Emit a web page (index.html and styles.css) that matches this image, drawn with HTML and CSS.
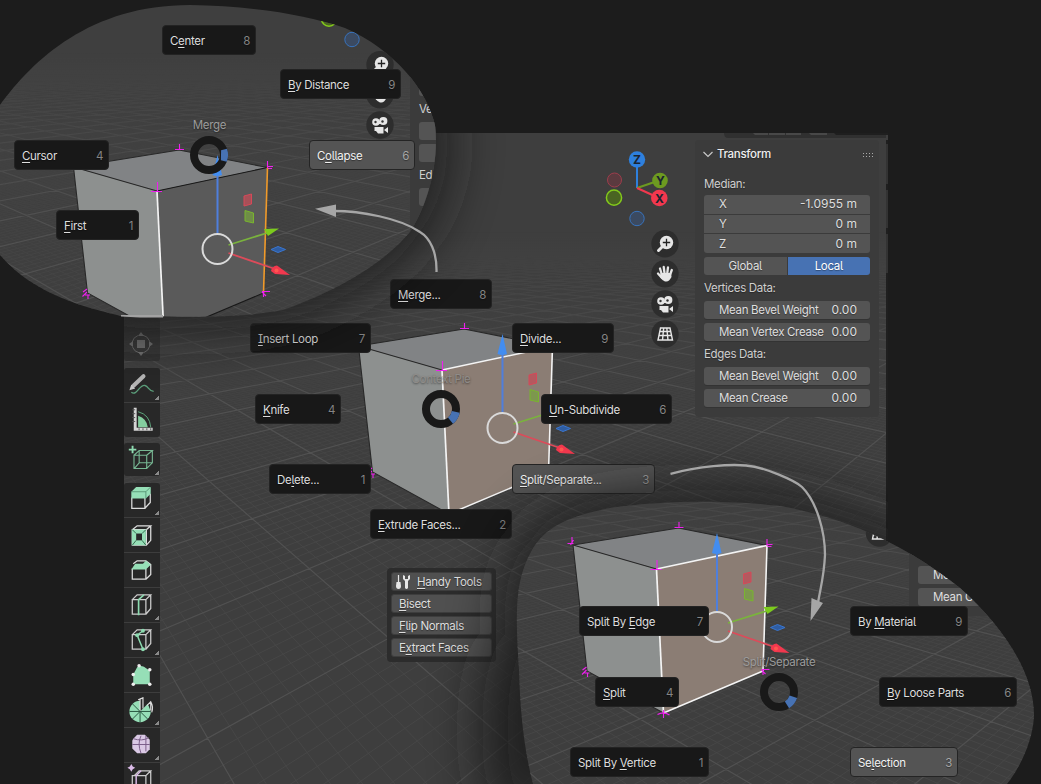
FILE: index.html
```html
<!DOCTYPE html>
<html lang="en">
<head>
<meta charset="utf-8">
<title>Context Pie</title>
<link rel="stylesheet" href="styles.css">
</head>
<body>
<svg class="defs" width="0" height="0" aria-hidden="true">
  <defs>
    <linearGradient id="fadeMinor" gradientUnits="userSpaceOnUse" x1="0" y1="255" x2="0" y2="520"><stop offset="0" stop-color="#000"/><stop offset=".35" stop-color="#555"/><stop offset="1" stop-color="#fff"/></linearGradient>
    <linearGradient id="fadeMajor" gradientUnits="userSpaceOnUse" x1="0" y1="232" x2="0" y2="400"><stop offset="0" stop-color="#000"/><stop offset="1" stop-color="#fff"/></linearGradient>
    <mask id="maskMinor" maskUnits="userSpaceOnUse" x="0" y="0" width="1041" height="784"><rect width="1041" height="784" fill="url(#fadeMinor)"/></mask>
    <mask id="maskMajor" maskUnits="userSpaceOnUse" x="0" y="0" width="1041" height="784"><rect width="1041" height="784" fill="url(#fadeMajor)"/></mask>
    <clipPath id="mainClip"><path d="M124 133H888V540H886V784H124Z"/></clipPath>
    <path id="lensA" d="M0 105C33 60 90 5 190 5C250 6 305 14 345 28C395 50 427 90 435 125C440 165 425 210 410 232C385 262 340 290 283 310C240 318 200 317 121 316C60 302 25 284 0 255Z"/>
    <path id="lensB" d="M533 784C524 750 520 710 519 670C515 610 515 580 532 550C545 528 565 517 610 508C670 499 740 501 780 506C850 518 910 548 960 588C1005 628 1035 675 1034 717C1032 745 1018 770 1007 784Z"/>
    <filter id="soft" x="-50%" y="-50%" width="200%" height="200%"><feGaussianBlur stdDeviation="27"/></filter>
    <g id="grid">
      <g mask="url(#maskMinor)"><path class="grid-minor"/></g>
      <g mask="url(#maskMajor)"><path class="grid-major"/></g>
    </g>
    <g id="cube">
      <path fill="#818385" d="M358.5 346L464 329L552.5 346.5L442 370Z"/>
      <path fill="#8d908f" d="M358.5 346L442 370L449 514L372.5 472Z"/>
      <path class="face" d="M442 370L552.5 346.5L548.5 472L449 514Z"/>
      <path fill="none" stroke="#282828" stroke-width="1.1" d="M442 370L358.5 346L464 329L552.5 346.5M358.5 346L372.5 472L449 514"/>
      <path class="face-edge" d="M442 370L552.5 346.5M548.5 472L449 514"/>
      <path class="right-edge" d="M552.5 346.5L548.5 472"/>
      <path fill="none" stroke="#f4f4f4" stroke-width="1.7" d="M442 370L449 514"/>
      <path class="spark" d="M442.500 361V370M436 370.500H447M464.500 323V329M460 328.500H469M552.500 340V347M553 345.500H558M553 347.500H557M357.500 338V345M353 344.500H359M356 346L359 341M368 471L372 468M370 474H375M373 474V478M367.500 475.500L372 471M547 470.500H555M548.500 470V476M551 475L547 471M449 511V519M443 515.500Q449 512 455 516"/>
    </g>
    <g id="gizmo">
      <path stroke="#4f7fdc" stroke-width="2" d="M502.500 412V354"/>
      <path fill="#438df0" d="M502.500 334L507 354Q502 356 497.500 354Z"/>
      <path stroke="#7ab33d" stroke-width="1.8" d="M513.500 424L552 412"/>
      <path fill="#7ccb1d" d="M564 407.500L549 408L553 415Z"/>
      <path stroke="#dc4b5a" stroke-width="1.8" d="M513.500 432L560 448"/>
      <path fill="#f2384e" d="M575 454L562 444.500Q557 445 556 450L560 453Z"/><circle cx="561.500" cy="449.500" r="2" fill="#ff5750"/>
      <path fill="#2f5da2" stroke="#3a76cf" d="M556 428.500L563 425.500L570.500 428.500L563 431.500Z"/>
      <path fill="#c14d58" fill-opacity=".75" stroke="#d74858" d="M529 375L536.500 373V383L529 385Z"/>
      <path fill="#77a23e" fill-opacity=".7" stroke="#79b52e" d="M530 389.500L538.500 392V402L530 400Z"/>
      <circle cx="502.500" cy="428" r="15" fill="none" stroke="#dadada" stroke-width="2"/>
    </g>
    <g id="axes">
      <circle cx="614.500" cy="180" r="7" fill="#5b3a3f" stroke="#9d3d4c"/>
      <circle cx="614" cy="197.700" r="7.600" fill="#4a6422" stroke="#83c91b" stroke-width="1.500"/>
      <circle cx="637" cy="218.500" r="7.200" fill="#3b4a61" stroke="#3873bd"/>
    </g>
    <g id="nav">
      <g class="nav-disc"><circle cx="665" cy="243.700" r="13.700"/><circle cx="665" cy="273.700" r="13.700"/><circle cx="665" cy="304" r="13.700"/><circle cx="665" cy="334" r="13.700"/></g>
      <g fill="#e6e6e6">
        <circle cx="666.500" cy="242.500" r="6.700"/><path stroke="#e6e6e6" stroke-width="3" stroke-linecap="round" d="M662 247L658.500 250.500"/><path stroke="#222" stroke-width="1.300" d="M662.800 242.500H670.200M666.500 238.800V246.200"/>
        <path fill="none" stroke="#e6e6e6" stroke-width="2.300" stroke-linecap="round" d="M662 275L660 268.500M664.500 273L663.700 267M667.300 273L668 267.300M670 275L671.800 270M662 278L658 273.500"/><path d="M660.500 273L671 273L671.500 277Q669 281.500 666.500 281.500H665Q662.500 281 660.500 277.500Z"/>
        <circle cx="661" cy="301" r="3.800"/><circle cx="668.300" cy="300" r="4.100"/><path d="M662 300H667V303H662ZM659.500 306H668.500V312.500H663L661 310H659.500ZM669 309L673 306V312Z"/><circle cx="660.500" cy="301" r="1.200" fill="#333"/><circle cx="667.500" cy="300.500" r="1.200" fill="#333"/>
        <path fill="none" stroke="#e6e6e6" stroke-width="1.400" d="M660.500 328H670L672.500 340H658ZM659.800 331.500H670.800M659 335.500H671.700M663.700 328L662.500 340M666.800 328L668 340"/>
      </g>
    </g>
  </defs>
</svg>

<main class="stage">
  <svg class="layer" viewBox="0 0 1041 784">
    <g clip-path="url(#mainClip)" class="selected-face">
      <rect x="124" y="133" width="764" height="651" fill="#3e3e3e"/>
      <use href="#grid"/><use href="#cube"/><use href="#gizmo"/><use href="#axes"/>
      <path stroke="#2e80dd" stroke-width="2" d="M637 188V160"/><path stroke="#6d9a20" stroke-width="2" d="M637 188L659 180.500"/><path stroke="#f2384e" stroke-width="2" d="M637 188L659 198"/>
      <circle cx="637" cy="159.500" r="8.200" fill="#2e80dd"/><circle cx="660" cy="180.500" r="7.800" fill="#6d9a20"/><circle cx="659.300" cy="198" r="8.300" fill="#f2384e"/>
      <g class="axis-name"><text x="637" y="164">Z</text><text x="660.500" y="185">Y</text><text x="659.500" y="202.500">X</text></g>
      <use href="#nav"/>
      <path fill="#303030" d="M724 133H886V138H728Q724 138 724 133Z"/>
      <path fill="#484848" d="M753 133H768V135H755ZM769 133H785V135H769ZM786 133H801V135H786ZM809 133H827V135H811Z"/>
      <path fill="#1f1f1f" d="M834 133H888V135H836ZM886 140H888V784H886Z"/><path fill="#333" d="M886 144H888V184H886ZM886 190H888V228H886ZM886 234H888V273H886Z"/>
    </g>
  </svg>

  <nav class="toolbar">
    <div class="tools">
      <svg class="tool first" viewBox="0 0 36 35"><g fill="none" stroke="#999"><circle cx="17" cy="18" r="9" stroke-dasharray="9 5" stroke-dashoffset="-2"/></g><path fill="#aaa" d="M13 14H21V22H13ZM17 6L20 10H14ZM17 30L20 26H14ZM5 18L9 15V21ZM29 18L25 15V21Z"/></svg>
    </div>
    <div class="tools">
      <svg class="tool corner" viewBox="0 0 36 35"><path stroke="#b5b5b5" stroke-width="4.200" stroke-linecap="round" d="M9.500 18L19.500 8.500"/><path fill="#c5c5c5" d="M5 23L7 17L11 21Z"/><path fill="none" stroke="#5b9e7a" stroke-width="1.400" d="M7 25C13 29 15 17 21 18C25 19 25 24 30 24"/></svg>
      <svg class="tool" viewBox="0 0 36 35"><path fill="#84ce9f" d="M14 13Q23 16 24 25H14Z"/><path fill="none" stroke="#5fa77e" d="M14 9Q26 12 27 25"/><path fill="none" stroke="#d5d5d5" stroke-width="3" d="M11 5V27H29"/><path stroke="#555" d="M8 9H11M8 13H11M8 17H11M8 21H11M15 28V30M19 28V30M23 28V30M27 28V30" transform="translate(0 -2)"/></svg>
    </div>
    <div class="tools">
      <svg class="tool corner" viewBox="0 0 36 35"><path stroke="#8edab0" stroke-width="2" d="M8 3V11M4 7H12"/><path fill="none" stroke="#76b692" stroke-width="1.200" d="M9.500 13H23V27H9.500ZM9.500 13L15 8H29L23 13M29 8V21L23 27M15 8V21H29M15 21L10 27"/></svg>
    </div>
    <div class="tools">
      <svg class="tool corner" viewBox="0 0 36 35"><path fill="none" stroke="#ddd" stroke-width="1.300" d="M7.500 15V26H21V15M21 26L26.500 20V11"/><path fill="#96dfb7" d="M7 9L12 4H27V11L22 16H7Z"/><path stroke="#4b8868" stroke-width=".8" fill="none" d="M7 9H22V16M22 9L27 4"/></svg>
      <svg class="tool" viewBox="0 0 36 35"><path fill="none" stroke="#ddd" stroke-width="1.300" d="M8 12V28H22.500V12ZM8 12L13 8H27L22.500 12M27 8V23L22.500 28"/><path fill="#96dfb7" d="M7.500 12H22V28H7.500Z"/><path fill="#292929" d="M12 16H18V23H12Z"/><path stroke="#356b4e" d="M8 12L12 16M22 12L18 16M8 28L12 23M22 28L18 23"/></svg>
      <svg class="tool" viewBox="0 0 36 35"><path fill="none" stroke="#ddd" stroke-width="1.300" d="M8 16V27H22V16M22 27L27 22V12L22 8H13L9 11"/><path fill="#96dfb7" d="M7 17L11 11H19L22 8L27 12L22 17Z"/></svg>
      <svg class="tool corner" viewBox="0 0 36 35"><path fill="none" stroke="#ccc" stroke-width="1.300" d="M8 12H22V27H8ZM8 12L13 7H27L22 12M27 7V21L22 27"/><path fill="none" stroke="#8cdaaf" stroke-width="1.700" d="M14.500 28V12L20 7"/></svg>
      <svg class="tool corner" viewBox="0 0 36 35"><path fill="none" stroke="#ccc" stroke-width="1.300" d="M8 12H22V27H8ZM8 12L13 7H27L22 12M27 7V21L22 27"/><path fill="none" stroke="#8cdaaf" stroke-width="1.500" d="M19 8L13 12.500L19 27"/><g fill="#8cdaaf"><circle cx="19" cy="8" r="2"/><circle cx="13" cy="12.500" r="2"/><circle cx="19" cy="27" r="2"/></g></svg>
      <svg class="tool" viewBox="0 0 36 35"><path fill="#96dfb7" d="M9 27V17L13 9.500Q16 7 20 9L26 13V27Z"/><g fill="#eee"><circle cx="9" cy="27" r="1.800"/><circle cx="9" cy="17" r="1.800"/><circle cx="15" cy="8" r="1.800"/><circle cx="26" cy="12" r="1.800"/><circle cx="26" cy="27" r="1.800"/></g></svg>
      <svg class="tool corner" viewBox="0 0 36 35"><circle cx="16" cy="19" r="11" fill="#96dfb7"/><path fill="#292929" d="M16 19V7L20 4L31 8L30 18L27 19L24 11Z"/><path fill="none" stroke="#ddd" stroke-width="1.200" d="M16 19V6L19 5V16M14 7L19 5M23 13L27 9Q30 14 28 20M27 9V18"/><path stroke="#27553f" d="M16 19V30M16 19H5M16 19L8 11M16 19L8 27M16 19L24 27M16 19H27"/></svg>
      <svg class="tool corner" viewBox="0 0 36 35"><path fill="#dac9e5" d="M9 11L13 7H21L26 12V22L22 26H13L8 21V13Z"/><path fill="none" stroke="#795c87" stroke-width="1" d="M8 17H26M17 8Q13 16 17 26M9 11Q18 14 25 10M22 8V24"/></svg>
      <svg class="tool" viewBox="0 0 36 35"><path fill="#dbbbe8" d="M7 1L8.500 3.500L11 5L8.500 6.500L7 9L5.500 6.500L3 5L5.500 3.500Z"/><path fill="none" stroke="#ccc" stroke-width="1.300" d="M8 28V13H22V28M10 13L15 8H27L22 13M27 8V28"/><path fill="none" stroke="#dbbbe8" stroke-width="1.500" d="M12 28V13L17 8"/></svg>
    </div>
  </nav>

  <aside class="panel">
    <header><svg width="10" height="7" viewBox="0 0 10 7"><path fill="none" stroke="#c8c8c8" stroke-width="1.200" d="M.5 1L5 5.500L9.500 1"/></svg><b>Transform</b><i class="grip"></i></header>
    <p class="label">Median:</p>
    <div class="stack">
      <div class="field"><span>X</span><span>-1.0955 m</span></div>
      <div class="field"><span>Y</span><span>0 m</span></div>
      <div class="field"><span>Z</span><span>0 m</span></div>
    </div>
    <div class="switch"><span>Global</span><span class="on">Local</span></div>
    <p class="label">Vertices Data:</p>
    <div class="field solo"><span>Mean Bevel Weight</span><span>0.00</span></div>
    <div class="field solo"><span>Mean Vertex Crease</span><span>0.00</span></div>
    <p class="label">Edges Data:</p>
    <div class="field solo"><span>Mean Bevel Weight</span><span>0.00</span></div>
    <div class="field solo"><span>Mean Crease</span><span>0.00</span></div>
  </aside>

  <section class="handy">
    <div class="row lead"><svg width="16" height="16" viewBox="0 0 16 16"><path stroke="#e6e6e6" stroke-width="1.200" d="M3.500 1V8"/><path fill="#e6e6e6" d="M1.500 8H5.500L6 12Q6 15 3.500 15Q1 15 1 12Z"/><path fill="#e6e6e6" d="M8 1V5L10 7V14Q11.500 16 13 14V7L15 5V1L13 2V5H10V2Z"/></svg><span><u>H</u>andy Tools</span></div>
    <div class="row"><span><u>B</u>isect</span></div>
    <div class="row"><span><u>F</u>lip Normals</span></div>
    <div class="row"><span>E<u>x</u>tract Faces</span></div>
  </section>

  <div class="pie-title on-cube" style="left:441px;top:379px">Context Pie</div>
  <svg class="ring" style="left:421px;top:389px" viewBox="-20 -20 40 40"><circle r="15" fill="none" stroke="#191919" stroke-width="8"/><path class="wedge" transform="rotate(31)" d="M17.900 -6.500A19 19 0 0 1 17.900 6.500L10.400 3.800A11 11 0 0 0 10.400 -3.800Z"/></svg>
  <div class="item" style="left:390px;top:279px;width:102px"><span><u>M</u>erge...</span><kbd>8</kbd></div>
  <div class="item" style="left:250px;top:323px;width:121px"><span><u>I</u>nsert Loop</span><kbd>7</kbd></div>
  <div class="item" style="left:512px;top:323px;width:102px"><span><u>D</u>ivide...</span><kbd>9</kbd></div>
  <div class="item" style="left:255px;top:394px;width:86px"><span><u>K</u>nife</span><kbd>4</kbd></div>
  <div class="item" style="left:541px;top:394px;width:131px"><span><u>U</u>n-Subdivide</span><kbd>6</kbd></div>
  <div class="item" style="left:269px;top:464px;width:102px"><span>De<u>l</u>ete...</span><kbd>1</kbd></div>
  <div class="item active" style="left:512px;top:464px;width:143px"><span><u>S</u>plit/Separate...</span><kbd>3</kbd></div>
  <div class="item" style="left:370px;top:509px;width:142px"><span><u>E</u>xtrude Faces...</span><kbd>2</kbd></div>

  <svg class="layer" viewBox="0 0 1041 784">
    <g clip-path="url(#mainClip)"><g class="halo" filter="url(#soft)"><use href="#lensA"/><use href="#lensB"/><ellipse cx="520" cy="730" rx="26" ry="90"/></g></g>
  </svg>

  <div class="lens lens-a">
    <svg class="layer" viewBox="0 0 1041 784"><rect width="1041" height="784" fill="#3f3f3f"/>
      <g class="plain-face" transform="translate(-285 -179)"><use href="#grid"/><use href="#cube"/><use href="#gizmo"/><use href="#axes"/><use href="#nav"/></g></svg>
    <div class="slice slice-a"><div class="field"></div><p class="label">Ve</p><div class="field"></div><div class="field"></div><p class="label">Ed</p><div class="field"></div></div>
  </div>
  <div class="lens lens-b">
    <svg class="layer" viewBox="0 0 1041 784"><rect width="1041" height="784" fill="#3e3e3e"/>
      <g class="selected-face" transform="translate(214.500 199)"><use href="#grid"/><use href="#cube"/><use href="#gizmo"/><use href="#nav"/></g></svg>
    <div class="slice slice-b"><div class="field"><span>Mea</span></div><div class="field"><span>Mean Cr</span></div></div>
  </div>

  <div class="pie-title" style="left:209.500px;top:125px">Merge</div>
  <svg class="ring" style="left:189px;top:135px" viewBox="-20 -20 40 40"><circle r="15" fill="none" stroke="#191919" stroke-width="8"/><path class="wedge" transform="rotate(1)" d="M17.900 -6.500A19 19 0 0 1 17.900 6.500L12 5V-5Z"/></svg>
  <div class="item" style="left:162px;top:25px;width:94px"><span>C<u>e</u>nter</span><kbd>8</kbd></div>
  <div class="item" style="left:280px;top:69px;width:121px"><span><u>B</u>y Distance</span><kbd>9</kbd></div>
  <div class="item" style="left:14px;top:140px;width:95px"><span><u>C</u>ursor</span><kbd>4</kbd></div>
  <div class="item active" style="left:309px;top:140px;width:106px"><span>C<u>o</u>llapse</span><kbd>6</kbd></div>
  <div class="item" style="left:56px;top:210px;width:83px"><span><u>F</u>irst</span><kbd>1</kbd></div>

  <div class="pie-title" style="left:779px;top:662px">Split/Separate</div>
  <svg class="ring" style="left:759px;top:672px" viewBox="-20 -20 40 40"><circle r="15" fill="none" stroke="#191919" stroke-width="8"/><path class="wedge" transform="rotate(38)" d="M17.900 -6.500A19 19 0 0 1 17.900 6.500L10.400 3.800A11 11 0 0 0 10.400 -3.800Z"/></svg>
  <div class="item" style="left:579px;top:606px;width:130px"><span>Split By <u>E</u>dge</span><kbd>7</kbd></div>
  <div class="item" style="left:850px;top:606px;width:118px"><span>By <u>M</u>aterial</span><kbd>9</kbd></div>
  <div class="item" style="left:595px;top:677px;width:84px"><span><u>S</u>plit</span><kbd>4</kbd></div>
  <div class="item" style="left:879px;top:677px;width:138px"><span><u>B</u>y Loose Parts</span><kbd>6</kbd></div>
  <div class="item" style="left:570px;top:747px;width:139px"><span>Split By <u>V</u>ertice</span><kbd>1</kbd></div>
  <div class="item active" style="left:850px;top:747px;width:108px"><span>Se<u>l</u>ection</span><kbd>3</kbd></div>

  <svg class="layer" viewBox="0 0 1041 784">
    <path fill="#a2a2a2" d="M121 315H163V317.500H140L121 316.500Z"/>
    <g fill="none" stroke="#a6a6a6" stroke-width="2.300"><path d="M436.500 272C437 252 430 238 420 232C400 218 360 211 334 211"/><path d="M670.500 473.800C700 466 730 464 746 465.500C765 467 796 481 802 487C817 502 825 532 825 555C824 577 820 590 818 603"/></g>
    <path fill="#a6a6a6" d="M315 208.800L336 204.500V217ZM810.500 621L811.500 598L823 603Z"/>
  </svg>
</main>
<script src="grid.js"></script>
</body>
</html>
```
FILE: styles.css
```css
* { box-sizing: border-box; }
body {
  margin: 0;
  background: #1c1c1c;
  color: #dedede;
  font: 11.5px/18px Inter, "Liberation Sans", sans-serif;
  letter-spacing: -0.32px;
  font-feature-settings: "cv05", "cv08";
}
.defs { position: absolute; }
.stage { position: relative; width: 1041px; height: 784px; overflow: hidden; }
.layer { position: absolute; left: 0; top: 0; width: 1041px; height: 784px; }

.grid-minor { fill: none; stroke: #474747; stroke-width: .9; }
.grid-major { fill: none; stroke: #515151; stroke-width: 1.2; }
.spark { fill: none; stroke: #ee1fee; stroke-width: 1.1; }
.nav-disc { fill: #2d2d2d; }
.selected-face { --face: #8b7d74; --edge: #f4f4f4; --right: #f4f4f4; --edge-w: 1.5; }
.plain-face { --face: #5a5a5a; --edge: #181818; --right: #f09a2a; --edge-w: 1.1; }
.face { fill: var(--face); }
.face-edge { fill: none; stroke: var(--edge); stroke-width: var(--edge-w); }
.right-edge { fill: none; stroke: var(--right); stroke-width: 1.6; }
.axis-name { font-weight: 700; font-size: 12px; text-anchor: middle; fill: #1b2430; letter-spacing: 0; }
.halo { fill: #1c1c1c; stroke: #1c1c1c; stroke-width: 24; opacity: .86; }

.item {
  position: absolute;
  display: flex;
  justify-content: space-between;
  align-items: center;
  height: 30px;
  padding: 1px 5px 0 7px;
  background: #181818;
  border: 1px solid #232323;
  border-radius: 4px;
  text-shadow: 0 1px 1px #0006;
}
.item.active { background: #545454; border-color: #242424; color: #f2f2f2; }
kbd { font: inherit; color: #858585; }
.active kbd { color: #a5a5a5; }
u { text-decoration: underline; text-underline-offset: 2px; text-decoration-thickness: 1px; text-decoration-skip-ink: none; }
.pie-title { position: absolute; transform: translate(-50%, -50%); color: #9b9b9b; text-shadow: 0 1px 2px #0008; white-space: nowrap; }
.pie-title.on-cube { color: #8f8c89; text-shadow: 0 1px 2px #0007; }
.ring { position: absolute; width: 40px; height: 40px; }
.wedge { fill: #4772b3; }

.toolbar { position: absolute; left: 124px; top: 318px; width: 36px; display: flex; flex-direction: column; gap: 7px; }
.tools { display: flex; flex-direction: column; gap: 1px; background: #3d3d3d; border-radius: 3px; overflow: hidden; }
.tool { display: block; width: 36px; height: 34px; background: #282828; }
.tools:nth-child(1) { opacity: .75; }
.tool.first { height: 43px; padding-top: 8px; opacity: .6; }
.tools:nth-child(3) { margin-top: -1px; }
.tools:nth-child(3) .tool { height: 33px; }
.tools:nth-child(4) .tool { height: 34px; }
.tool.corner { background: linear-gradient(135deg, transparent 50%, #8a8a8a 50%) 31px 28px / 4px 4px no-repeat, #282828; }

.panel { position: absolute; left: 695px; top: 140px; width: 184px; height: 277px; padding: 0 9px; background: #3b3b3b; border-radius: 4px; text-shadow: 0 1px 1px #0005; }
.panel header { display: flex; align-items: center; gap: 4px; height: 28px; margin-left: -1px; color: #eee; }
.panel header b { font-weight: 500; }
.grip { width: 11px; height: 5px; margin-left: auto; margin-right: -3px; background: radial-gradient(#aaa 35%, transparent 40%) 0 0 / 3px 3px; }
.label { margin: 0; height: 22px; line-height: 22px; color: #cfcfcf; }
.panel > .label:first-of-type { margin-top: 5px; }
.stack { display: flex; flex-direction: column; gap: 1px; border-radius: 3px; overflow: hidden; margin-bottom: 4px; }
.field { display: flex; align-items: center; justify-content: space-between; height: 18px; padding: 0 13px 0 15px; background: #545454; white-space: nowrap; }
.field span + span { font-size: 12px; letter-spacing: 0; }
.stack .field { height: 18.700px; }
.stack + .switch { margin-top: 4px; }
.solo { border-radius: 3px; margin: 4px 0; box-shadow: 0 1px #333; }
.label + .solo { margin-top: 2px; }
.solo + .label { margin-top: -2px; }
.switch { display: flex; gap: 1px; height: 18px; border-radius: 3px; overflow: hidden; margin-bottom: 2px; text-align: center; }
.switch span { flex: 1; background: #545454; }
.switch .on { background: #4772b3; color: #fff; }

.handy { position: absolute; left: 387px; top: 568px; width: 109px; height: 94px; display: flex; flex-direction: column; gap: 3px; padding: 4px; background: #2c2c2c; border-radius: 4px; }
.row { display: flex; align-items: center; height: 19px; padding: 0 7px; background: #505050; border: 1px solid #3d3d3d; border-radius: 3px; text-shadow: 0 1px 1px #0006; white-space: nowrap; }
.row.lead { padding: 0 3px; gap: 6px; }

.lens { position: absolute; inset: 0; }
.lens-a { clip-path: path("M0 105C33 60 90 5 190 5C250 6 305 14 345 28C395 50 427 90 435 125C440 165 425 210 410 232C385 262 340 290 283 310C240 318 200 317 121 316C60 302 25 284 0 255Z"); }
.lens-b { clip-path: path("M533 784C524 750 520 710 519 670C515 610 515 580 532 550C545 528 565 517 610 508C670 499 740 501 780 506C850 518 910 548 960 588C1005 628 1035 675 1034 717C1032 745 1018 770 1007 784Z"); }
.slice { position: absolute; display: flex; flex-direction: column; gap: 4px; width: 184px; padding-left: 9px; background: #3b3b3b; }
.slice .field { border-radius: 3px 0 0 3px; }
.slice .label { height: 18px; line-height: 18px; }
.slice-a { left: 410px; top: 40px; height: 196px; padding-top: 38px; }
.slice-b { left: 909px; top: 500px; height: 116px; padding-top: 66px; }
```
FILE: grid.js
```js
// Ground grid in two-point perspective: each family of lines meets at its own
// vanishing point, and inverse slopes are evenly spaced.
const HORIZON = 217, FLOOR = 790;
const families = [
  { x: 1151, dir: -1, start: 1.81, step: 0.585 },
  { x: -93, dir: 1, start: 2.278, step: 0.567 }
];
function lines(subdivisions, limit) {
  let d = '';
  for (const f of families) {
    const step = f.step / subdivisions;
    for (let n = -3 * subdivisions; ; n++) {
      const c = f.start + n * step;
      if (c > limit) break;
      if (subdivisions > 1 && n % subdivisions === 0) continue;
      const x = f.x + f.dir * c * (FLOOR - HORIZON);
      d += `M${f.x} ${HORIZON}L${x.toFixed(1)} ${FLOOR}`;
    }
  }
  return d;
}
document.querySelector('.grid-minor').setAttribute('d', lines(10, 12));
document.querySelector('.grid-major').setAttribute('d', lines(1, 40));
```
